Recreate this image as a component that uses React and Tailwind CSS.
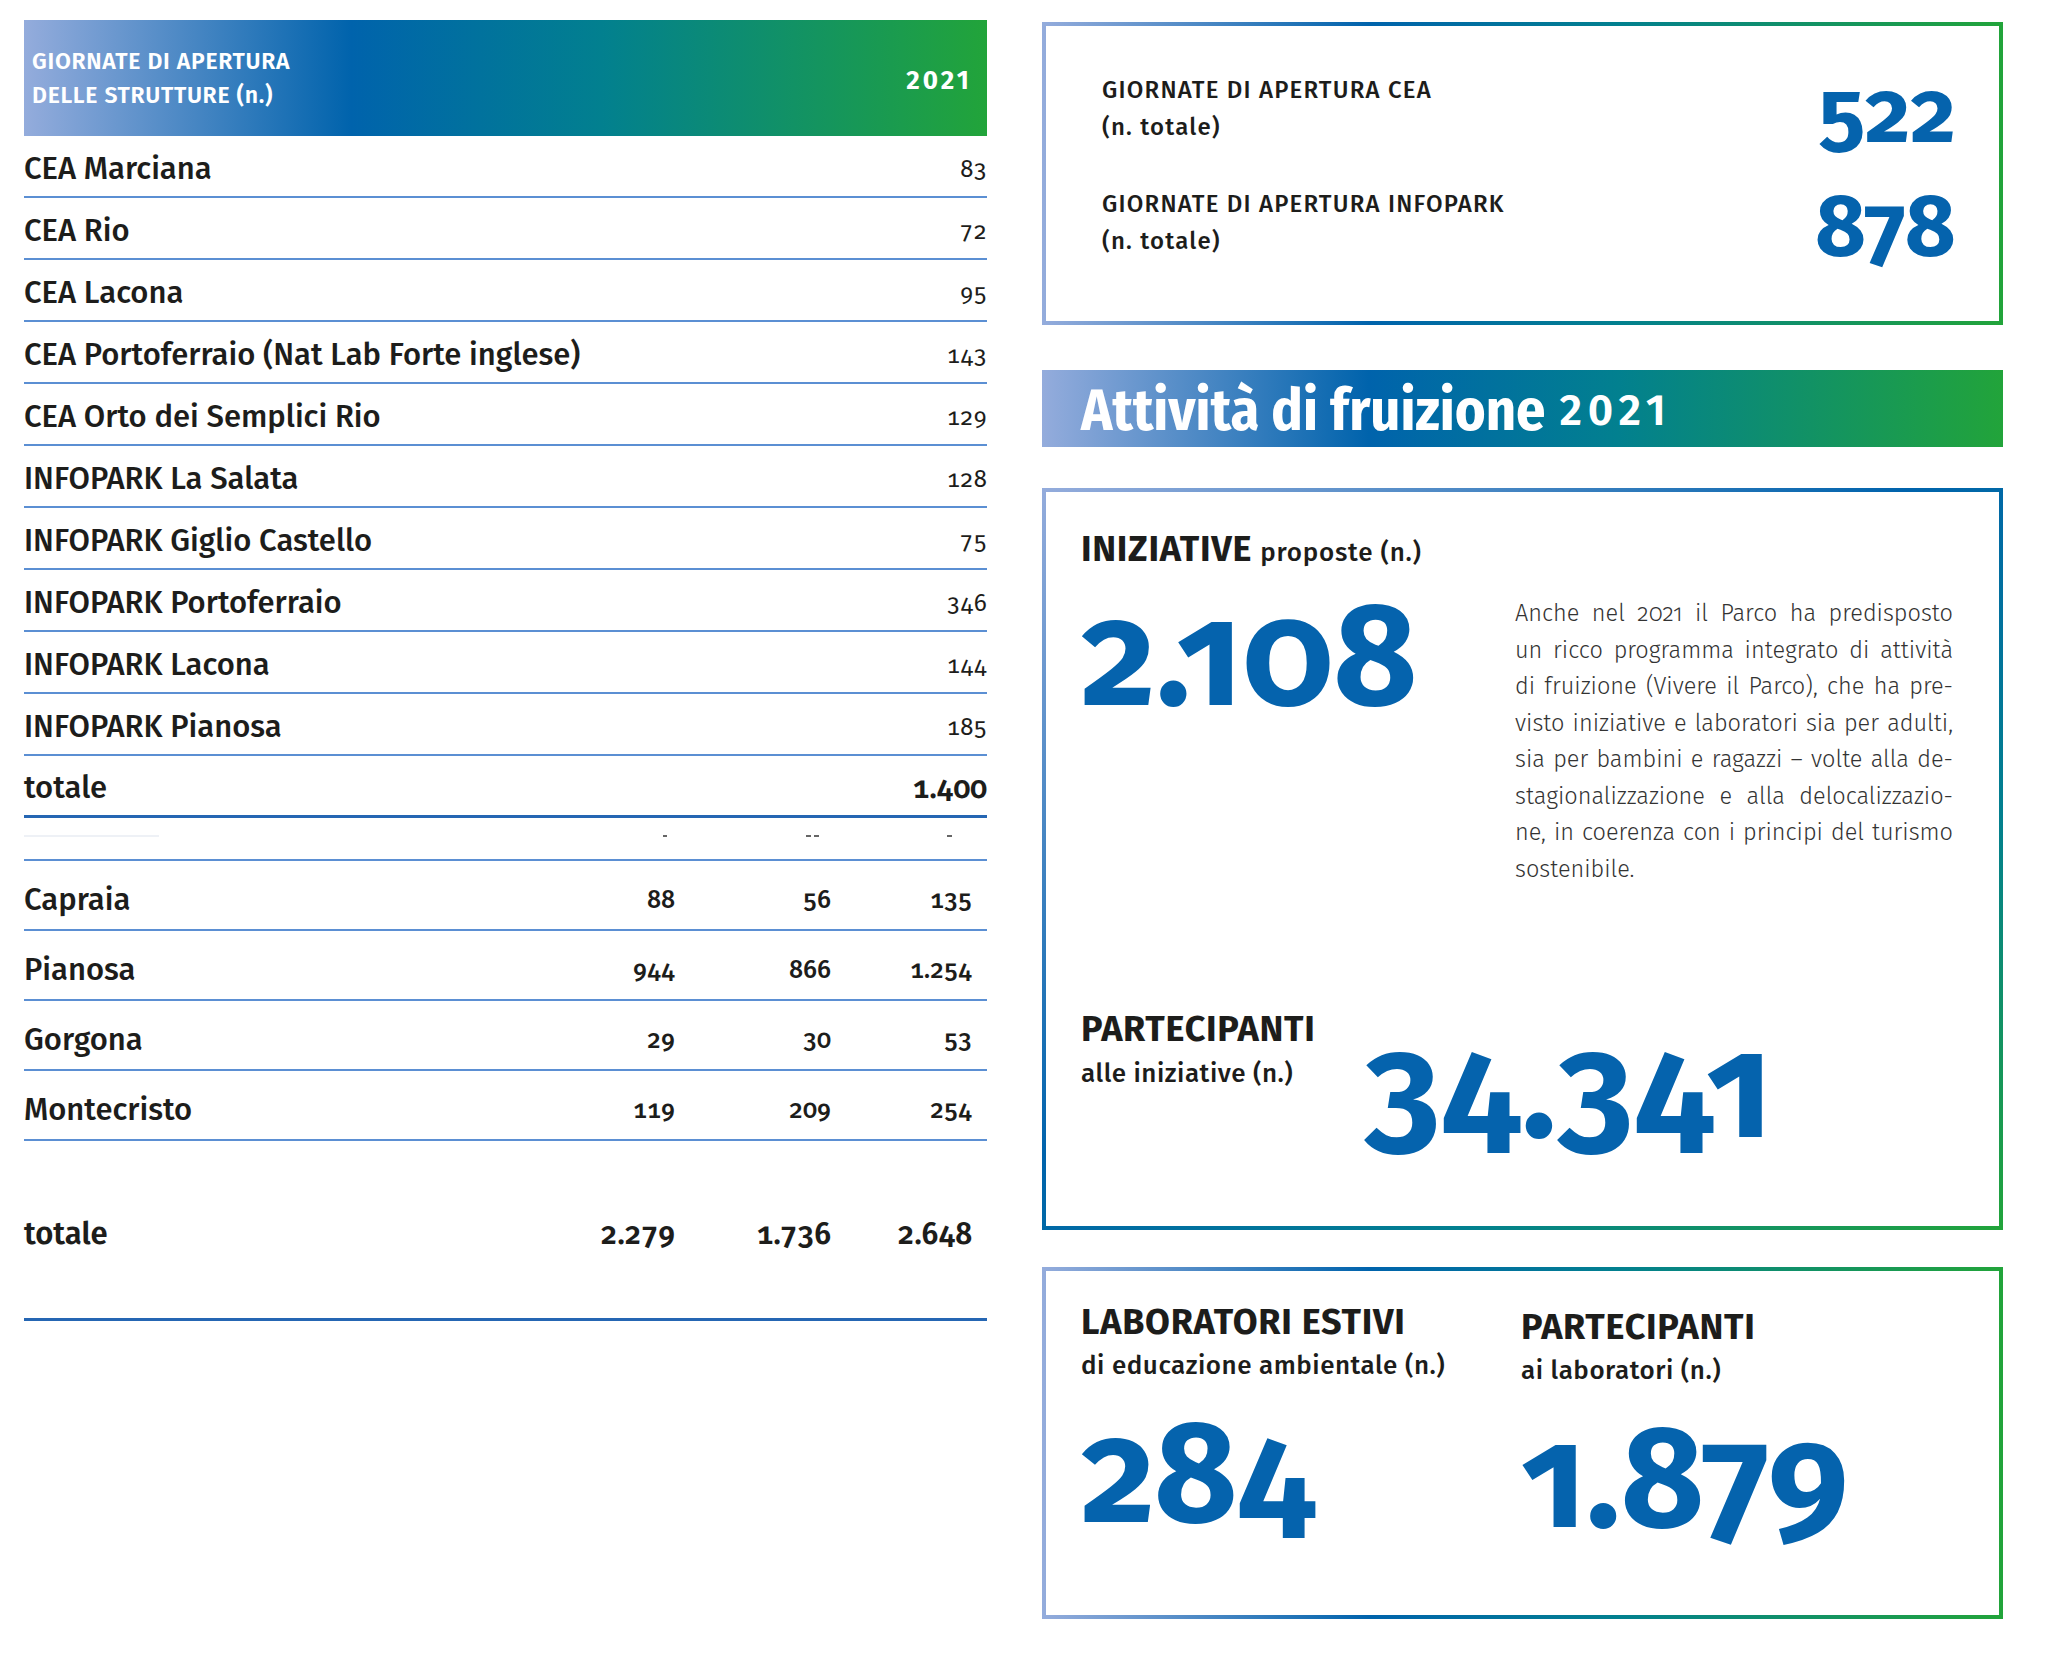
const GRAD_H = "bg-[linear-gradient(to_right,#94acdc_0%,#0063ac_34%,#02808f_60%,#22a43a_100%)]";

const rows1 = [
  ["CEA Marciana", "83"],
  ["CEA Rio", "72"],
  ["CEA Lacona", "95"],
  ["CEA Portoferraio (Nat Lab Forte inglese)", "143"],
  ["CEA Orto dei Semplici Rio", "129"],
  ["INFOPARK La Salata", "128"],
  ["INFOPARK Giglio Castello", "75"],
  ["INFOPARK Portoferraio", "346"],
  ["INFOPARK Lacona", "144"],
  ["INFOPARK Pianosa", "185"],
];

const rows2 = [
  ["Capraia", "88", "56", "135"],
  ["Pianosa", "944", "866", "1.254"],
  ["Gorgona", "29", "30", "53"],
  ["Montecristo", "119", "209", "254"],
];

const para = [
  "Anche nel 2021 il Parco ha predisposto",
  "un ricco programma integrato di attività",
  "di fruizione (Vivere il Parco), che ha pre-",
  "visto iniziative e laboratori sia per adulti,",
  "sia per bambini e ragazzi – volte alla de-",
  "stagionalizzazione e alla delocalizzazio-",
  "ne, in coerenza con i principi del turismo",
  "sostenibile.",
];

function LeftColumn() {
  return (
    <div className="w-[963px] flex flex-col">
      <div className={`h-[116px] ${GRAD_H} flex items-center justify-between pl-[8px] pr-[15px] text-white`}>
        <div className="text-[23px] leading-[34px] font-semibold tracking-[0.03em]">
          <div>GIORNATE DI APERTURA</div>
          <div>DELLE STRUTTURE (n.)</div>
        </div>
        <div className="text-[26px] font-bold pt-[4px] tracking-[0.12em]">2021</div>
      </div>
      {rows1.map(([l, v]) => (
        <div key={l} className="h-[62px] border-b-2 border-[#5b8fd3] flex items-center justify-between pt-[6px]">
          <span className="text-[31px] font-medium text-[#1d1d1b]">{l}</span>
          <span className="text-[24px] text-[#1d1d1b] [font-variant-numeric:oldstyle-nums_tabular-nums]">{v}</span>
        </div>
      ))}
      <div className="h-[62px] border-b-[3px] border-[#2566b3] flex items-center justify-between pt-[6px]">
        <span className="text-[31px] font-medium text-[#1d1d1b]">totale</span>
        <span className="text-[30px] font-semibold text-[#1d1d1b] [font-variant-numeric:oldstyle-nums_tabular-nums]">1.400</span>
      </div>
      <div className="h-[43px] border-b-2 border-[#5b8fd3] flex items-start pt-[17px]">
        <div className="w-[135px] h-[2px] bg-[#eef1f6]" />
        <div className="flex-1" />
        <div className="w-[150px] flex justify-end pr-[8px]"><div className="w-[4px] h-[2px] bg-[#666]" /></div>
        <div className="w-[156px] flex justify-end gap-[3px] pr-[12px]"><div className="w-[5px] h-[2px] bg-[#666]" /><div className="w-[5px] h-[2px] bg-[#666]" /></div>
        <div className="w-[141px] flex justify-end pr-[20px]"><div className="w-[5px] h-[2px] bg-[#666]" /></div>
        <div className="w-[15px]" />
      </div>
      {rows2.map(([l, a, b, c]) => (
        <div key={l} className="h-[70px] border-b-2 border-[#5b8fd3] grid grid-cols-[1fr_150px_156px_141px_15px] items-center pt-[11px]">
          <span className="text-[31px] font-medium text-[#1d1d1b]">{l}</span>
          <span className="text-[25px] font-medium text-right text-[#1d1d1b] [font-variant-numeric:oldstyle-nums_tabular-nums]">{a}</span>
          <span className="text-[25px] font-medium text-right text-[#1d1d1b] [font-variant-numeric:oldstyle-nums_tabular-nums]">{b}</span>
          <span className="text-[25px] font-medium text-right text-[#1d1d1b] [font-variant-numeric:oldstyle-nums_tabular-nums]">{c}</span>
          <span />
        </div>
      ))}
      <div className="h-[180px] border-b-[3px] border-[#2566b3] grid grid-cols-[1fr_150px_156px_141px_15px] items-center pt-[10px]">
        <span className="text-[31px] font-semibold text-[#1d1d1b]">totale</span>
        <span className="text-[30px] font-semibold text-right text-[#1d1d1b] [font-variant-numeric:oldstyle-nums_tabular-nums]">2.279</span>
        <span className="text-[30px] font-semibold text-right text-[#1d1d1b] [font-variant-numeric:oldstyle-nums_tabular-nums]">1.736</span>
        <span className="text-[30px] font-semibold text-right text-[#1d1d1b] [font-variant-numeric:oldstyle-nums_tabular-nums]">2.648</span>
        <span />
      </div>
    </div>
  );
}

function StatRow({ label, value }) {
  return (
    <div className="flex items-end justify-between">
      <div className="text-[24px] leading-[37px] font-medium tracking-[0.05em] text-[#1d1d1b]">
        <div>{label}</div>
        <div>(n. totale)</div>
      </div>
      <div className="text-[88px] leading-[66px] font-bold text-[#0563ad] oldstyle-nums">{value}</div>
    </div>
  );
}

function RightColumn() {
  return (
    <div className="w-[961px] flex flex-col">
      <div className={`h-[303px] p-[4px] ${GRAD_H}`}>
        <div className="h-full bg-white pl-[56px] pr-[43px] pt-[46px] flex flex-col gap-[40px]">
          <StatRow label="GIORNATE DI APERTURA CEA" value="522" />
          <StatRow label="GIORNATE DI APERTURA INFOPARK" value="878" />
        </div>
      </div>

      <div className={`mt-[45px] h-[77px] ${GRAD_H} flex items-center pl-[39px] pt-[5px] text-white`}>
        <span className="text-[58px] leading-none font-bold font-['Fira_Sans_Condensed','Fira_Sans',sans-serif]">Attività di fruizione</span>
        <span className="text-[44px] leading-none font-semibold ml-[14px] tracking-[0.13em]">2021</span>
      </div>

      <div className="mt-[41px] h-[742px] p-[4px] bg-[linear-gradient(to_bottom_right,#94acdc_0%,#0063ac_45%,#02808f_72%,#22a43a_100%)]">
        <div className="h-full bg-white pl-[35px] pt-[39px] flex flex-col text-[#1d1d1b]">
          <div className="flex items-baseline leading-none">
            <span className="text-[36px] font-bold tracking-[0.02em]">INIZIATIVE</span>
            <span className="text-[26px] font-medium ml-[8px] tracking-[0.03em]">proposte (n.)</span>
          </div>
          <div className="flex mt-[17px]">
            <div className="w-[434px] text-[145px] leading-none font-bold text-[#0563ad] oldstyle-nums">2.108</div>
            <div className="w-[438px] mt-[11px] text-[23.5px] leading-[36.5px] font-light text-[#333] oldstyle-nums">
              {para.map((line, i) => (
                <div key={i} className={i < para.length - 1 ? "whitespace-nowrap text-justify [text-align-last:justify]" : "whitespace-nowrap"}>{line}</div>
              ))}
            </div>
          </div>
          <div className="flex mt-[116px]">
            <div className="w-[284px] pt-[8px]">
              <div className="text-[36px] leading-none font-bold tracking-[0.02em]">PARTECIPANTI</div>
              <div className="text-[26px] leading-none font-medium mt-[14px] tracking-[0.02em]">alle iniziative (n.)</div>
            </div>
            <div className="mt-[12px] text-[146px] leading-none font-bold tracking-[0.01em] text-[#0563ad] oldstyle-nums">34.341</div>
          </div>
        </div>
      </div>

      <div className={`mt-[37px] h-[352px] p-[4px] ${GRAD_H}`}>
        <div className="h-full bg-white pl-[35px] pt-[33px] flex text-[#1d1d1b]">
          <div className="w-[440px] flex flex-col">
            <div className="text-[36px] leading-none font-bold tracking-[0.02em]">LABORATORI ESTIVI</div>
            <div className="text-[26px] leading-none font-medium mt-[13px] tracking-[0.02em]">di educazione ambientale (n.)</div>
            <div className="text-[144px] leading-none font-bold text-[#0563ad] oldstyle-nums mt-[23px]">284</div>
          </div>
          <div className="flex flex-col pt-[5px]">
            <div className="text-[36px] leading-none font-bold tracking-[0.02em]">PARTECIPANTI</div>
            <div className="text-[26px] leading-none font-medium mt-[13px] tracking-[0.02em]">ai laboratori (n.)</div>
            <div className="text-[144px] leading-none font-bold text-[#0563ad] oldstyle-nums mt-[23px]">1.879</div>
          </div>
        </div>
      </div>
    </div>
  );
}

export default function App() {
  return (
    <div className="w-[2048px] h-[1680px] bg-white font-['Fira_Sans','Fira_Sans_Condensed',sans-serif]">
      <div className="flex pl-[24px] pt-[20px] gap-[55px]">
        <LeftColumn />
        <div className="pt-[2px]">
          <RightColumn />
        </div>
      </div>
    </div>
  );
}
